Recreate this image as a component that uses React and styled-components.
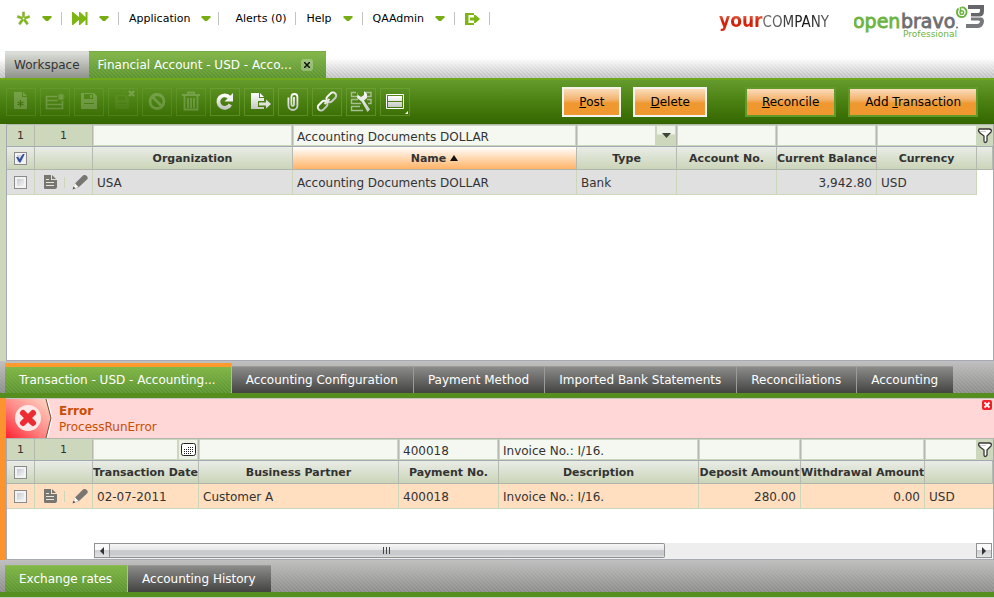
import React from "react";
import styled, { createGlobalStyle, css } from "styled-components";

const GlobalStyle = createGlobalStyle`
  * { box-sizing: border-box; }
  html, body { margin: 0; padding: 0; }
  body {
    background: #fff;
    color: #333;
    font-family: "DejaVu Sans", Verdana, sans-serif;
    font-size: 12px;
  }
  button, input { font: inherit; color: inherit; margin: 0; }
  button { cursor: pointer; }
`;

const Page = styled.div`
  display: flex;
  flex-direction: column;
  min-height: 100vh;
`;

/* ---------- top bar ---------- */

const TopBar = styled.header`
  display: flex;
  justify-content: space-between;
  align-items: flex-start;
  height: 51px;
`;

const Menu = styled.nav`
  display: flex;
  align-items: center;
  height: 37px;
  padding-left: 6px;
`;

const MenuButton = styled.button`
  display: flex;
  align-items: center;
  gap: 11px;
  height: 13px;
  padding: 0 ${(p) => (p.$tight ? 7 : 9)}px 0 ${(p) => (p.$wide ? 16 : 10)}px;
  border: 0;
  border-right: 1px solid #c3c3c3;
  background: none;
  color: #000;
  font-size: 11px;
  line-height: 13px;
  white-space: nowrap;
`;

const Logos = styled.div`
  display: flex;
  align-items: flex-start;
  gap: 25px;
  padding-right: 9px;
`;

const CompanyLogo = styled.div`
  display: flex;
  align-items: baseline;
  padding-top: 8px;
  font-family: "DejaVu Sans Condensed", "DejaVu Sans", sans-serif;
  line-height: 24px;
`;

const LogoYour = styled.span`
  font-family: "DejaVu Sans Condensed", "DejaVu Sans", sans-serif;
  font-size: 19px;
  font-weight: bold;
  background: linear-gradient(#f08060 20%, #cf2008 55%, #dd2c10);
  background-clip: text;
  color: transparent;
`;

const LogoCompany = styled.span`
  font-size: 15px;
  background: linear-gradient(100deg, #666 15%, #111 60%, #666);
  background-clip: text;
  color: transparent;
`;

/* ---------- document tabs ---------- */

const hatch = css`
  linear-gradient(
    45deg,
    rgba(0, 0, 0, 0.1) 25%,
    transparent 25% 50%,
    rgba(0, 0, 0, 0.1) 50% 75%,
    transparent 75%
  ) 0 0 / 4px 4px
`;

const TabStrip = styled.div`
  display: flex;
  align-items: stretch;
  height: 27px;
  padding-left: 5px;
  background: linear-gradient(#fff 25%, rgba(255, 255, 255, 0)),
    ${hatch}, #d0d0d0;
`;

const DocTab = styled.div`
  display: flex;
  align-items: center;
  gap: 9px;
  padding: 0 ${(p) => (p.$active ? 13 : 9)}px 0 9px;
  border-top: 1px solid ${(p) => (p.$active ? "#79aa45" : "#d8dad6")};
  background: ${(p) =>
    p.$active
      ? css`linear-gradient(#84b74b, rgba(132, 183, 75, 0)), ${hatch}, #679f39`
      : "linear-gradient(#dde0da, #8f938b)"};
`;

const DocTabLabel = styled.button`
  padding: 0;
  border: 0;
  background: none;
  color: ${(p) => (p.$active ? "#fff" : "#333")};
  line-height: 24px;
  white-space: nowrap;
`;

const TabClose = styled.button`
  display: flex;
  align-items: center;
  justify-content: center;
  width: 12px;
  height: 12px;
  padding: 0;
  border: 0;
  border-radius: 3px;
  background: rgba(255, 255, 255, 0.28);
`;

/* ---------- toolbar ---------- */

const Toolbar = styled.div`
  display: flex;
  align-items: center;
  justify-content: space-between;
  height: 46px;
  padding: 0 16px 0 6px;
  border-top: 2px solid #6fa81a;
  background: linear-gradient(#659a2c, #4a8012 50%, #346600);
`;

const ToolGroup = styled.div`
  display: flex;
  gap: ${(p) => p.$gap}px;
`;

const ToolButton = styled.button`
  display: flex;
  align-items: center;
  justify-content: center;
  width: 30px;
  height: 28px;
  padding: 0;
  border: 1px solid rgba(119, 170, 62, ${(p) => (p.disabled ? 0.3 : 0.5)});
  background: none;

  svg { opacity: ${(p) => (p.disabled ? 0.2 : 1)}; }
`;

const ActionButton = styled.button`
  height: 30px;
  padding: 0 15px;
  border: 2px solid ${(p) => (p.$outlined ? "#f4f4ee" : "#5f9a2a")};
  background: linear-gradient(#fbdcb9, #f3b470 40%, #ef9830 55%, #ef9830) padding-box;
  color: #000;
  line-height: 26px;
  white-space: nowrap;
`;

/* ---------- grids ---------- */

const Pane = styled.section`
  display: flex;
  flex-direction: column;
  flex: ${(p) => (p.$grow ? "1 0 auto" : "0 0 auto")};
  border-left: 6px solid ${(p) => (p.$focused ? "#fb942e" : "#cdd7bb")};
`;

const PaneBody = styled.div`
  display: flex;
  flex-direction: column;
  flex: 1;
  border: 1px solid #a7a9b3;
  border-top-color: #b3b5b0;
`;

const Grid = styled.table`
  width: 100%;
  table-layout: fixed;
  border-collapse: separate;
  border-spacing: 0;
`;

const FilterCell = styled.td`
  height: 22px;
  padding: 0;
  border-right: ${(p) => (p.$last ? 0 : 1)}px solid #b5b9b0;
  border-bottom: 1px solid #a3a9b0;
  background: #cdd7bb;
  font-size: 11px;
  text-align: center;
`;

const FilterBox = styled.div`
  display: flex;
  height: 21px;
`;

const FilterInput = styled.input`
  flex: 1;
  width: 100%;
  min-width: 0;
  height: 21px;
  padding: 2px 3px 0;
  border: 1px solid #cdd7bb;
  border-radius: 0;
  outline: 0;
  background: #f5f8f1;
  font-size: 12px;
`;

const FilterButton = styled.button`
  display: flex;
  align-items: center;
  justify-content: center;
  width: 20px;
  height: 21px;
  padding: 0;
  border: 1px solid #cdd7bb;
  background: ${(p) => (p.$plain ? "#eef2e6" : "linear-gradient(#f0f3e9 40%, #cdd7bb 50%)")};
`;

const FunnelButton = styled.button`
  display: flex;
  align-items: center;
  justify-content: center;
  width: 100%;
  height: 21px;
  padding: 0;
  border: 0;
  background: none;
`;

const HeadCell = styled.th`
  height: 23px;
  padding: ${(p) => (p.$flush ? 0 : 2)}px 0 0;
  border-right: ${(p) => (p.$last ? 0 : 1)}px solid #b5b9b0;
  border-bottom: 1px solid #b0b4ac;
  background: ${(p) =>
    p.$sorted ? "linear-gradient(#fff, #ffb366)" : "linear-gradient(#e9ece7, #cbd5b8)"};
  font-size: 11px;
  line-height: 20px;
  white-space: nowrap;
  overflow: hidden;
`;

const SortArrow = styled.svg`
  margin-left: 4px;
  vertical-align: 1px;
`;

const Cell = styled.td`
  height: 25px;
  padding: ${(p) => (p.$flush ? 0 : 2)}px 4px 0;
  border-right: ${(p) => (p.$last ? 0 : 1)}px solid #cbd7b8;
  border-bottom: 1px solid #cbd7b8;
  background: ${(p) => (p.$selected ? "#ffdfbf" : "#e0e0e0")};
  text-align: ${(p) => (p.$right ? "right" : "left")};
  white-space: nowrap;
`;

const EmptyCell = styled.td`
  padding: 0;
`;

const BoxWrap = styled.div`
  display: flex;
  justify-content: center;
`;

const CheckBox = styled.input.attrs({ type: "checkbox" })`
  appearance: none;
  width: 13px;
  height: 13px;
  border: 1px solid #8b8b8b;
  background: linear-gradient(135deg, #b9bec9, #fff);
  box-shadow: inset 0 0 0 2px #f3f3f3;

  &:checked::after {
    content: "";
    display: block;
    width: 9px;
    height: 9px;
    margin: 1px;
    background: #34519b;
    clip-path: polygon(0 40%, 25% 40%, 40% 62%, 80% 0, 100% 0, 50% 100%, 35% 100%);
  }
`;

const RowActions = styled.div`
  display: flex;
  align-items: center;
  justify-content: space-between;
  padding-left: 4px;
`;

const RowButton = styled.button`
  display: flex;
  padding: 0;
  border: 0;
  background: none;
`;

const Divider = styled.span`
  width: 1px;
  height: 11px;
  background: #cbd7b8;
`;

/* ---------- horizontal scroll bar ---------- */

const ScrollTrack = styled.div`
  display: flex;
  height: 16px;
  margin: 34px 1px 0 87px;
  background: #eee;
`;

const ScrollArrow = styled.button`
  display: flex;
  align-items: center;
  justify-content: center;
  width: 16px;
  height: 15px;
  padding: 0;
  border: 1px solid #929292;
  background: linear-gradient(#fafafa 45%, #cecfd3 50%, #e4e4e6);
`;

const ScrollThumb = styled.div`
  display: flex;
  align-items: center;
  justify-content: center;
  flex: 16;
  height: 15px;
  border: 1px solid #929292;
  border-left: 0;
  border-radius: 0 2px 2px 0;
  background: linear-gradient(#f6f6f6, #e6e7e9 45%, #cbccd0 50%, #c8c9cc 80%, #e0e0e0);
`;

const ScrollSpace = styled.div`
  flex: 9;
`;

/* ---------- child tabs ---------- */

const ChildBar = styled.div`
  display: flex;
  align-items: flex-end;
  height: 37px;
  padding-left: 5px;
  border-bottom: 5px solid #558d1f;
  background: linear-gradient(#c0c0c0, rgba(176, 176, 174, 0.1)), ${hatch}, #959593;
`;

const ChildTab = styled.button`
  height: ${(p) => (p.$marked ? 30 : 27)}px;
  padding: 1px 15px 0 14px;
  border: 0;
  border-top: ${(p) => (p.$marked ? "4px solid #ff9a2e" : `1px solid ${p.$active ? "#8dbb58" : "#9b9b99"}`)};
  border-right: 1px solid ${(p) => (p.$active ? "#b5b5b3" : "#9b9b99")};
  background: ${(p) =>
    p.$active
      ? css`linear-gradient(#82b748, rgba(130, 183, 72, 0)), ${hatch}, #679f39`
      : "linear-gradient(#8b8c8a, #434342)"};
  color: #fff;
  line-height: 25px;
  white-space: nowrap;

  &:last-child { border-right: 0; }
`;

const FootLine = styled.footer`
  height: 1px;
  background: #c9cbc5;
`;

/* ---------- message ---------- */

const Message = styled.div`
  display: flex;
  align-items: flex-start;
  height: 40px;
  border-top: 1px solid #c3c5c3;
  background: #ffd7d6;
`;

const MessageText = styled.div`
  flex: 1;
  padding: 4px 0 0 7px;
  color: #c84e05;
  line-height: 16px;
`;

const MessageTitle = styled.div`
  font-weight: bold;
`;

const MessageClose = styled.button`
  display: flex;
  margin: 1px 2px 0 0;
  padding: 0;
  border: 0;
  background: none;
`;

/* ---------- icons ---------- */

const DownArrow = () => (
  <svg width="10" height="6" viewBox="0 0 10 6" aria-hidden="true">
    <path d="M0.500 0h9v1.500L6 5H4L.5 1.500z" fill="#77ad12" />
  </svg>
);

const Star = () => (
  <svg width="15" height="15" viewBox="0 0 15 15" aria-hidden="true">
    <g fill="none">
      <path
        d="M7.500 .5v7M1 5.500l6.500 2M14 5.500l-6.500 2M3 13.500l4.500-6M12 13.500l-4.500-6"
        stroke="#c9cfc0"
        strokeWidth="3"
      />
      <path
        d="M7.500 1v6.500M1.500 5.500l6 2M13.500 5.500l-6 2M3.500 13l4-5.500M11.500 13l-4-5.500"
        stroke="#83b716"
        strokeWidth="2.200"
      />
    </g>
    <circle cx="7.500" cy="7.500" r="1" fill="#fff" />
  </svg>
);

const FastForward = () => (
  <svg width="16" height="13" viewBox="0 0 16 13" aria-hidden="true">
    <path d="M0 0h1l6 5V0h1l5.500 5V0H15.500v13h-2V8L8 13H7V8l-6 5H0z" fill="#7fb512" />
  </svg>
);

const Exit = () => (
  <svg width="15" height="12" viewBox="0 0 15 12" aria-hidden="true">
    <path d="M0 0h9v2H3.500v8H9v2H0z" fill="#7fb512" />
    <path d="M5 4.500h4V2h1.500L15 6l-4.500 4H9V7.500H5z" fill="#7fb512" />
  </svg>
);

const ProductLogo = () => (
  <svg width="131" height="42" viewBox="0 0 131 42" role="img" aria-label="openbravo 3 Professional">
    <g fontFamily="DejaVu Sans, sans-serif">
      <text x="-1" y="28" fontSize="19" fill="#6cb33f" stroke="#6cb33f" strokeWidth="0.800">open</text>
      <text x="47" y="28" fontSize="19" fill="#6d6e71" stroke="#6d6e71" strokeWidth="0.800">bravo</text>
      <text x="49" y="37" fontSize="9" fill="#6cb33f">Professional</text>
    </g>
    <circle cx="103" cy="27.500" r="1" fill="#6d6e71" />
    <path
      d="M104.500 8.500c-3 3-1.500 8.500 3 8.500 5 0 6.500-6 3.500-8.500-1-1-2.500-1.200-3.500-.8"
      fill="none"
      stroke="#6cb33f"
      strokeWidth="1.800"
    />
    <path d="M106.500 7v5" stroke="#6cb33f" strokeWidth="1.600" />
    <circle cx="107.800" cy="12.500" r="1.800" fill="none" stroke="#6cb33f" strokeWidth="1.500" />
    <g fill="none" stroke="#66676a" strokeWidth="4">
      <path d="M114 7h14v4q0 4-4 4h-7" />
      <path d="M117 18.500h7q4 0 4 3-.5 4.500-5 4.500h-11" stroke="#77787b" />
    </g>
    <path d="M112 17h19" stroke="#fff" />
  </svg>
);

const Silver = () => (
  <defs>
    <linearGradient id="silver" x1="0" y1="0" x2="0" y2="1">
      <stop offset="0" stopColor="#fff" />
      <stop offset="1" stopColor="#c4c8c0" />
    </linearGradient>
  </defs>
);

const tools = [
  {
    name: "New in form",
    off: true,
    art: (
      <>
        <path d="M5 2h8v5h5v12H5z" fill="#fff" />
        <path d="M14 2l4 4h-4z" fill="#fff" />
        <path d="M11.500 10v7M8.500 12l6 3M14.500 12l-6 3" stroke="#234800" strokeWidth="1.200" />
      </>
    ),
  },
  {
    name: "New in grid",
    off: true,
    art: (
      <>
        <path d="M14 6.500H3.500v12h16V11M3.500 10.500h11M3.500 14.500h16" stroke="#fff" strokeWidth="1.600" fill="none" />
        <path d="M18 3.500v7M14.500 7h7M15.500 4.500l5 5M20.500 4.500l-5 5" stroke="#fff" strokeWidth="1.200" />
      </>
    ),
  },
  {
    name: "Save",
    off: true,
    art: <path fillRule="evenodd" d="M4 3h13l3 3v13H4zM7 4v5h9V4zM13 5h2v3h-2zM7 13v1h10v-1z" fill="#fff" />,
  },
  {
    name: "Save and close",
    off: true,
    art: (
      <>
        <path fillRule="evenodd" d="M4 5h11l3 3v11H4zM7 6v4h7V6zM7 13v1h8v-1z" fill="#fff" opacity="0.250" />
        <path d="M18 1l5 5M23 1l-5 5" stroke="#fff" strokeWidth="2.400" />
      </>
    ),
  },
  {
    name: "Undo",
    off: true,
    art: (
      <>
        <circle cx="12" cy="11.500" r="7" fill="none" stroke="#fff" strokeWidth="2.800" />
        <path d="M7 6.500l10 10" stroke="#fff" strokeWidth="2.800" />
      </>
    ),
  },
  {
    name: "Delete record",
    off: true,
    art: (
      <path
        d="M3 5h18M9 4V2.500h6V4M5.500 6v13.500h13V6M9 8v10M12 8v10M15 8v10"
        stroke="#fff"
        strokeWidth="1.800"
        fill="none"
      />
    ),
  },
  {
    name: "Refresh",
    art: (
      <>
        <path d="M16.500 7.500a6.300 6.300 0 1 0 .8 7" stroke="url(#silver)" strokeWidth="3.800" fill="none" />
        <path d="M20 3v8.500h-8.500z" fill="#f4f4f4" />
      </>
    ),
  },
  {
    name: "Export",
    art: (
      <>
        <path d="M4 3h8v5h5v3h-6v6h6v2H4z" fill="url(#silver)" />
        <path d="M13 3l4 4h-4z" fill="#fff" />
        <path d="M12 12.500h7V9.500l5 4.500-5 4.500v-3h-7z" fill="#dfe1dc" />
      </>
    ),
  },
  {
    name: "Attachments",
    art: (
      <path
        d="M13 7v7.500a1.300 1.300 0 0 1-2.600 0V7a3 3 0 0 1 6 0v8.500a4.500 4.500 0 0 1-9 0V7.500"
        stroke="url(#silver)"
        strokeWidth="1.800"
        fill="none"
      />
    ),
  },
  {
    name: "Linked items",
    art: (
      <g fill="none" stroke="url(#silver)" strokeWidth="2">
        <rect x="11" y="4" width="11" height="6.500" rx="3.200" transform="rotate(-45 16.500 7.500)" />
        <rect x="2" y="12.500" width="11" height="6.500" rx="3.200" transform="rotate(-45 7.500 15.500)" />
        <path d="M9.500 14l5-5" stroke="#e4e6e1" />
      </g>
    ),
  },
  {
    name: "Configure",
    art: (
      <>
        <path
          d="M7 2.500H2.500v4H9M16 2.500h6v4h-4M9 9.500H2.500v4H12M18 9.500h4v4h-3M11 16.500H2.500v4H14"
          stroke="#a7bd92"
          strokeWidth="1.400"
          fill="none"
        />
        <path d="M9 2v3l3 2 3-2V1l3 3v4l-3 2.500 6 9-2.500 2.500-6-10.500L8 8z" fill="url(#silver)" />
      </>
    ),
  },
  {
    name: "Change view",
    art: (
      <>
        <path d="M3.500 4.500h17v14h-17z" fill="none" stroke="#fff" />
        <path d="M5 6h14v5H5zM5 12h14v5H5z" fill="url(#silver)" />
        <path d="M25 21v3h-3z" fill="#fff" />
      </>
    ),
  },
];

const Funnel = () => (
  <svg width="16" height="18" viewBox="0 0 16 18" aria-hidden="true">
    <path
      d="M2 2h10c2 0 3 1 2 3l-1 1-3 3v5c-1 2-3 2-3 0V9L3 6 1.500 4z"
      fill="#fff"
      stroke="#383838"
      strokeWidth="1.300"
      strokeLinejoin="round"
    />
    <path d="M3 4.500h6" stroke="#ccc" />
  </svg>
);

const DocIcon = () => (
  <svg width="14" height="16" viewBox="0 0 14 16" aria-hidden="true">
    <path d="M1 1h7v5h6v7c0 1-1 2-2 2H2c-1 0-1-1-1-1z" fill="#777671" />
    <path d="M9 1l4 4H9z" fill="#777671" />
    <path d="M3 8.500h8M3 11.500h8M3 5.500h3" stroke="#e8e4de" />
  </svg>
);

const PencilIcon = () => (
  <svg width="16" height="16" viewBox="0 0 16 16" aria-hidden="true">
    <path d="M1 15l2.500-6L11 1.500c2.500-1.500 5.500 1 4.500 3.500L7 13z" fill="#777671" />
    <path d="M1.500 14.500l1.500-5 3.500 3.500z" fill="#fff" />
    <path d="M0.500 15.500l1-3 2 1.700z" fill="#555" />
  </svg>
);

const Calendar = () => (
  <svg width="15" height="13" viewBox="0 0 15 13" aria-hidden="true">
    <rect x="0.500" y="0.500" width="14" height="12" rx="2" fill="#fff" stroke="#222" />
    <path d="M7 4.500h6M3 6.500h10M3 8.500h10M3 10.500h8" stroke="#222" strokeDasharray="1 1" />
  </svg>
);

const ErrorIcon = () => (
  <svg width="46" height="39" viewBox="0 0 46 39" aria-hidden="true">
    <defs>
      <linearGradient id="errorFade" x1="0" y1="1" x2="1" y2="0">
        <stop offset="0" stopColor="#ff2030" />
        <stop offset="0.450" stopColor="#ff8583" />
        <stop offset="1" stopColor="#ffdcc8" />
      </linearGradient>
    </defs>
    <path d="M0 0h40l5 19-5 20H0z" fill="url(#errorFade)" />
    <path d="M41 0l5 19-5 20" fill="none" stroke="#fff" strokeWidth="1.500" />
    <path d="M40 0l5 19-5 20" fill="none" stroke="#70503a" />
    <circle cx="22" cy="19" r="13" fill="#ffe9e8" />
    <path d="M17 14l10 10M27 14L17 24" stroke="#ec2b33" strokeWidth="6" strokeLinecap="round" />
  </svg>
);

/* ---------- composed parts ---------- */

const HotKey = ({ before = "", letter, after }) => (
  <>
    {before}
    <u>{letter}</u>
    {after}
  </>
);

const RowTools = () => (
  <RowActions>
    <RowButton aria-label="Open in form"><DocIcon /></RowButton>
    <Divider />
    <RowButton aria-label="Edit in grid"><PencilIcon /></RowButton>
  </RowActions>
);

const FilterField = ({ label, value = "", picker, plain, pickerLabel }) => (
  <FilterBox>
    <FilterInput aria-label={label} defaultValue={value} />
    {picker && <FilterButton $plain={plain} aria-label={pickerLabel}>{picker}</FilterButton>}
  </FilterBox>
);

function Selector({ label, checked }) {
  return (
    <BoxWrap>
      <CheckBox aria-label={label} defaultChecked={checked} />
    </BoxWrap>
  );
}

const comboArrow = (
  <svg width="9" height="5" viewBox="0 0 9 5" aria-hidden="true">
    <path d="M0 0h9L4.500 5z" fill="#3f443a" />
  </svg>
);

const accountColumns = [
  { title: "Organization", width: 200, value: "USA" },
  { title: "Name", filter: "Accounting Documents DOLLAR", value: "Accounting Documents DOLLAR", sorted: true },
  { title: "Type", width: 100, value: "Bank", picker: comboArrow, pickerLabel: "Choose type" },
  { title: "Account No.", width: 100, value: "" },
  { title: "Current Balance", width: 100, value: "3,942.80", right: true },
  { title: "Currency", width: 100, value: "USD" },
];

const transactionColumns = [
  { title: "Transaction Date", width: 106, value: "02-07-2011", picker: <Calendar />, plain: true, pickerLabel: "Choose date" },
  { title: "Business Partner", value: "Customer A" },
  { title: "Payment No.", width: 100, filter: "400018", value: "400018" },
  { title: "Description", width: 200, filter: "Invoice No.: I/16.", value: "Invoice No.: I/16." },
  { title: "Deposit Amount", width: 102, value: "280.00", right: true },
  { title: "Withdrawal Amount", width: 124, value: "0.00", right: true },
  { title: "", name: "Currency", width: 52, value: "USD", wide: true },
];

const Col = styled.col`
  width: ${(p) => (p.$w ? `${p.$w}px` : "auto")};
`;

function DataGrid({ label, columns, selected, allChecked }) {
  const wideLast = columns[columns.length - 1].wide;
  return (
    <Grid aria-label={label}>
      <colgroup>
        <Col $w={28} />
        <Col $w={58} />
        {columns.map((c) => <Col key={c.title} $w={c.width} />)}
        <Col $w={16} />
      </colgroup>
      <tbody>
        <tr>
          <FilterCell>1</FilterCell>
          <FilterCell>1</FilterCell>
          {columns.map((c) => (
            <FilterCell key={c.title} $last={c.wide || c.title === "Currency"}>
              <FilterField
                label={`Filter ${c.title || c.name}`}
                value={c.filter}
                picker={c.picker}
                plain={c.plain}
                pickerLabel={c.pickerLabel}
              />
            </FilterCell>
          ))}
          <FilterCell $last>
            <FunnelButton aria-label="Clear filter"><Funnel /></FunnelButton>
          </FilterCell>
        </tr>
        <tr>
          <HeadCell $flush><Selector label="Select all" checked={allChecked} /></HeadCell>
          <HeadCell $flush />
          {columns.map((c) => (
            <HeadCell key={c.title} scope="col" $sorted={c.sorted} colSpan={c.wide ? 2 : 1}>
              {c.title}
              {c.sorted && (
                <SortArrow width="8" height="6" viewBox="0 0 8 6" aria-hidden="true">
                  <path d="M4 0l4 6H0z" fill="#111" />
                </SortArrow>
              )}
            </HeadCell>
          ))}
          {!wideLast && <HeadCell $flush />}
        </tr>
        <tr>
          <Cell $flush $selected={selected}><Selector label="Select row" /></Cell>
          <Cell $flush $selected={selected}><RowTools /></Cell>
          {columns.map((c) => (
            <Cell
              key={c.title}
              $selected={selected}
              $right={c.right}
              $last={c.wide}
              colSpan={c.wide ? 2 : 1}
            >
              {c.value}
            </Cell>
          ))}
          {!wideLast && <EmptyCell />}
        </tr>
      </tbody>
    </Grid>
  );
}

const childTabs = [
  "Transaction - USD - Accounting...",
  "Accounting Configuration",
  "Payment Method",
  "Imported Bank Statements",
  "Reconciliations",
  "Accounting",
];

export default function App() {
  return (
    <Page>
      <GlobalStyle />
      <TopBar>
        <Menu aria-label="Main">
          <MenuButton aria-label="Create new"><Star /><DownArrow /></MenuButton>
          <MenuButton aria-label="Quick launch"><FastForward /><DownArrow /></MenuButton>
          <MenuButton $tight>Application<DownArrow /></MenuButton>
          <MenuButton $wide>Alerts (0)</MenuButton>
          <MenuButton>Help<DownArrow /></MenuButton>
          <MenuButton>QAAdmin<DownArrow /></MenuButton>
          <MenuButton aria-label="Log out"><Exit /></MenuButton>
        </Menu>
        <Logos>
          <CompanyLogo>
            <LogoYour>your</LogoYour>
            <LogoCompany>COMPANY</LogoCompany>
          </CompanyLogo>
          <ProductLogo />
        </Logos>
      </TopBar>

      <TabStrip>
        <DocTab><DocTabLabel>Workspace</DocTabLabel></DocTab>
        <DocTab $active>
          <DocTabLabel $active>Financial Account - USD - Acco...</DocTabLabel>
          <TabClose aria-label="Close tab">
            <svg width="6" height="6" viewBox="0 0 6 6" aria-hidden="true">
              <path d="M0 0l6 6M6 0L0 6" stroke="#111" strokeWidth="1.500" />
            </svg>
          </TabClose>
        </DocTab>
      </TabStrip>

      <Toolbar>
        <ToolGroup $gap={4}>
          {tools.map((t) => (
            <ToolButton key={t.name} aria-label={t.name} disabled={t.off}>
              <svg width="28" height="26" viewBox="-2 -1 28 26" aria-hidden="true">
                <Silver />
                {t.art}
              </svg>
            </ToolButton>
          ))}
        </ToolGroup>
        <ToolGroup $gap={38}>
          <ToolGroup $gap={12}>
            <ActionButton $outlined><HotKey letter="P" after="ost" /></ActionButton>
            <ActionButton $outlined><HotKey letter="D" after="elete" /></ActionButton>
          </ToolGroup>
          <ToolGroup $gap={12}>
            <ActionButton><HotKey letter="R" after="econcile" /></ActionButton>
            <ActionButton><HotKey before="Add " letter="T" after="ransaction" /></ActionButton>
          </ToolGroup>
        </ToolGroup>
      </Toolbar>

      <Pane $grow>
        <PaneBody>
          <DataGrid label="Financial accounts" columns={accountColumns} allChecked />
        </PaneBody>
      </Pane>

      <ChildBar>
        {childTabs.map((t, i) => (
          <ChildTab key={t} $active={i === 0} $marked={i === 0}>{t}</ChildTab>
        ))}
      </ChildBar>

      <Pane $focused>
        <Message role="alert">
          <ErrorIcon />
          <MessageText>
            <MessageTitle>Error</MessageTitle>
            ProcessRunError
          </MessageText>
          <MessageClose aria-label="Dismiss">
            <svg width="10" height="10" viewBox="0 0 10 10" aria-hidden="true">
              <rect width="10" height="10" rx="2" fill="#f3202c" />
              <path d="M2.500 2.500l5 5M7.500 2.500l-5 5" stroke="#fff" strokeWidth="1.800" />
            </svg>
          </MessageClose>
        </Message>
        <PaneBody>
          <DataGrid label="Transactions" columns={transactionColumns} selected />
          <ScrollTrack>
            <ScrollArrow aria-label="Scroll left">
              <svg width="4" height="8" viewBox="0 0 4 8" aria-hidden="true"><path d="M4 0v8L0 4z" fill="#333" /></svg>
            </ScrollArrow>
            <ScrollThumb>
              <svg width="9" height="7" viewBox="0 0 9 7" aria-hidden="true">
                <path d="M1.500 0v7M4.500 0v7M7.500 0v7" stroke="#444" />
              </svg>
            </ScrollThumb>
            <ScrollSpace />
            <ScrollArrow aria-label="Scroll right">
              <svg width="4" height="8" viewBox="0 0 4 8" aria-hidden="true"><path d="M0 0v8l4-4z" fill="#333" /></svg>
            </ScrollArrow>
          </ScrollTrack>
        </PaneBody>
      </Pane>

      <ChildBar>
        <ChildTab $active>Exchange rates</ChildTab>
        <ChildTab>Accounting History</ChildTab>
      </ChildBar>
      <FootLine />
    </Page>
  );
}
